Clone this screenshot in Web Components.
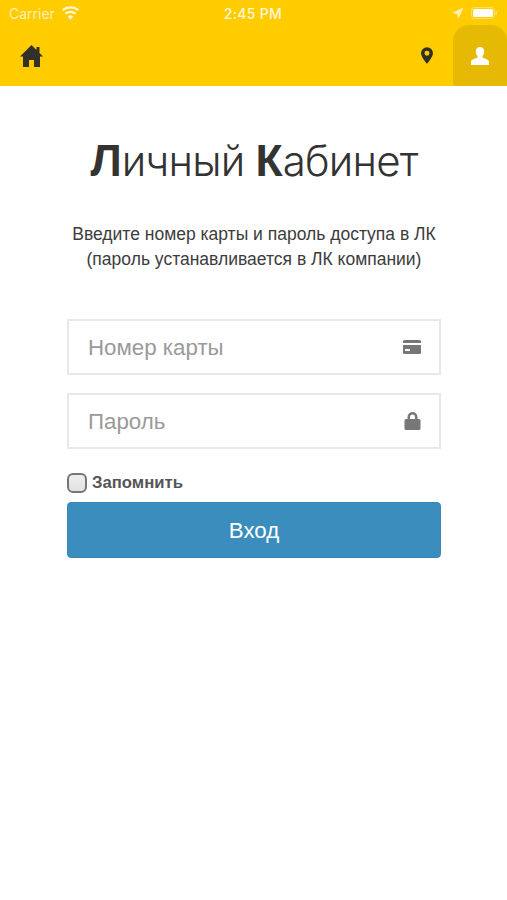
<!DOCTYPE html>
<html lang="ru"><head><meta charset="utf-8"><title>Личный Кабинет</title>
<style>html,body{margin:0;background:#fff}body{font-family:"Liberation Sans",Arial,sans-serif}</style></head>
<body>
<app-shell></app-shell>
<script>
const def=(n,html)=>customElements.define(n,class extends HTMLElement{constructor(){super();this.attachShadow({mode:'open'}).innerHTML=html}});
def('status-bar',`<style>:host{display:grid;grid-template-columns:1fr auto 1fr;align-items:center;height:26px;padding:0 10px 0 9px;color:#fff;font:14px "Inter","Liberation Sans",sans-serif}
.l{display:flex;align-items:center;gap:6px}.l span{opacity:.7}.r{display:flex;justify-content:flex-end;align-items:center;gap:7px}.t{font-weight:500;font-size:14px;letter-spacing:.3px;opacity:.85}svg{display:block}</style>
<div class="l"><span>Carrier</span><svg width="19" height="15" viewBox="0 0 18 14" fill="#fff" opacity=".85"><path d="M9 13 6.400 9.800a4.200 4.200 0 0 1 5.200 0Z"/><path d="M4.900 8a6.800 6.800 0 0 1 8.200 0l1.300-1.600a9 9 0 0 0-10.800 0Z"/><path d="M2.200 4.700a11 11 0 0 1 13.600 0l1.400-1.700a13.300 13.300 0 0 0-16.400 0Z"/></svg></div>
<div class="t">2:45 PM</div>
<div class="r"><svg width="13" height="13" viewBox="0 0 13 13" fill="#fff" opacity=".7"><path d="M12.500.5 1 5.800l5 1.200L7.400 12Z"/></svg><svg width="26" height="12" viewBox="0 0 26 12"><rect x=".5" y=".5" width="23" height="11" rx="3" fill="none" stroke="#fff" stroke-opacity=".4"/><rect x="2" y="2" width="20" height="8" rx="1.500" fill="#fff"/><rect x="24.500" y="4" width="1.500" height="4" rx=".7" fill="#fff" opacity=".4"/></svg></div>`);
def('nav-bar',`<style>:host{display:flex;align-items:stretch;height:60px;background:#fc0;justify-content:space-between}
.home{display:flex;align-items:center;padding-left:20px}.r{display:flex;align-items:stretch}.pin{display:flex;align-items:center;padding:0 20px 1px 0}
.user{width:54px;background:#e6b905;border-radius:16px 16px 0 0;margin-top:-1px;display:flex;align-items:center;justify-content:center}svg{display:block}</style>
<div class="home"><svg width="23" height="22" viewBox="0 0 23 22" fill="#33302a"><path d="M11.500 0 0 11.500h3V22h6v-7h5v7h6V11.500h3L19.500 8V2h-3v3Z"/></svg></div>
<div class="r"><div class="pin"><svg width="12" height="17" viewBox="0 0 13 18"><path fill-rule="evenodd" fill="#33302a" d="M6.500 0A6.500 6.500 0 0 0 0 6.500C0 10.500 6.500 18 6.500 18S13 10.500 13 6.500A6.500 6.500 0 0 0 6.500 0Zm0 3.800a2.700 2.700 0 1 1 0 5.400 2.700 2.700 0 0 1 0-5.400Z"/></svg></div>
<div class="user"><svg width="18" height="18" viewBox="0 0 18 18" fill="#fff"><path d="M9 0c2.800 0 4.200 1.900 4.200 4.600 0 2-.8 3.600-1.800 4.600v1.400c2.600 1 6.600 2 6.600 4.400V18H0v-3c0-2.400 4-3.400 6.600-4.400V9.200c-1-1-1.800-2.600-1.800-4.600C4.800 1.900 6.200 0 9 0Z"/></svg></div></div>`);
def('text-field',`<style>:host{display:flex;align-items:center;justify-content:space-between;box-sizing:border-box;height:56px;border:2px solid #e8e8e8;background:#fff;padding:2px 18px 0 19px;font:22.3px "Liberation Sans",Arial,sans-serif;color:#9a9a9a}::slotted(svg){display:block;margin-top:-2px}</style><slot></slot><slot name="icon"></slot>`);
def('check-row',`<style>:host{display:flex;align-items:center;gap:5px;height:20px;font:bold 16.7px "Liberation Sans",Arial,sans-serif;color:#555}
i{box-sizing:border-box;display:block;width:20px;height:20px;border:2px solid #777;border-radius:6px;background:linear-gradient(#eee,#e2e2e2)}</style><i></i><slot></slot>`);
def('primary-button',`<style>:host{display:flex;align-items:center;justify-content:center;height:56px;box-sizing:border-box;padding-top:1px;background:#3b8dbd;border:1px solid #3a87b7;border-radius:4px;color:#fff;font:22.3px "Liberation Sans",Arial,sans-serif}</style><slot></slot>`);
def('login-form',`<style>:host{display:flex;flex-direction:column;align-items:stretch;padding:0 66px 0 67px}
h1{margin:52px -20px 0;text-align:center;font:300 42px/46px "Inter","Liberation Sans",sans-serif;letter-spacing:-.8px;color:#333}h1 b{font:700 44.500px/46px "Liberation Sans",Arial,sans-serif;letter-spacing:0}
p{margin:38px -20px 0;text-align:center;font:17.5px/25px "Liberation Sans",Arial,sans-serif;color:#3c3c3c}
.f{display:flex;flex-direction:column;gap:18px;margin-top:47px}check-row{margin-top:24px}primary-button{margin-top:9px}</style>
<h1><b>Л</b>ичный <b>К</b>абинет</h1>
<p>Введите номер карты и пароль доступа в ЛК<br>(пароль устанавливается в ЛК компании)</p>
<div class="f"><text-field>Номер карты<svg slot="icon" width="18" height="14" viewBox="0 0 18 14" fill="#777"><path fill-rule="evenodd" d="M0 1.500A1.500 1.500 0 0 1 1.500 0h15A1.500 1.500 0 0 1 18 1.500V3H0ZM0 5h18v7.500a1.500 1.500 0 0 1-1.500 1.500h-15A1.500 1.500 0 0 1 0 12.500ZM2 9v2h5V9Z"/></svg></text-field>
<text-field>Пароль<svg slot="icon" width="17" height="18" viewBox="0 0 16 18" fill="#777"><path fill-rule="evenodd" d="M3 7V5a5 5 0 0 1 10 0v2h1.500A1.500 1.500 0 0 1 16 8.500v8a1.500 1.500 0 0 1-1.500 1.500h-13A1.500 1.500 0 0 1 0 16.500v-8A1.500 1.500 0 0 1 1.500 7ZM5.500 7h5V5a2.500 2.500 0 0 0-5 0Z"/></svg></text-field></div>
<check-row>Запомнить</check-row>
<primary-button>Вход</primary-button>`);
def('app-shell',`<style>:host{display:block;min-height:900px;background:#fff}.top{background:#fc0}</style><div class="top"><status-bar></status-bar><nav-bar></nav-bar></div><login-form></login-form>`);
</script>
</body></html>
